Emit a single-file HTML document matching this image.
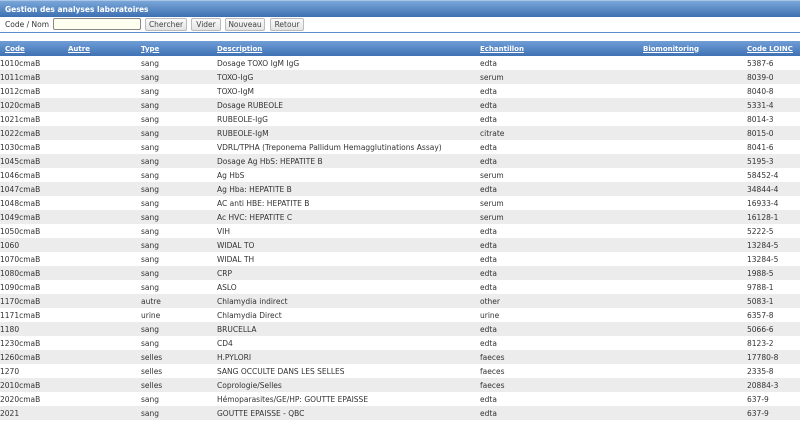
<!DOCTYPE html>
<html><head><meta charset="utf-8"><style>
body{margin:0;width:800px;height:423px;overflow:hidden;background:#fff;font-family:"DejaVu Sans","Liberation Sans",sans-serif;font-size:7.5px;color:#333}
.title{position:absolute;left:0;top:0;width:800px;height:17px;background:linear-gradient(#7aa6d8,#3d70b2);color:#fff;font-weight:bold;font-size:7.5px;line-height:17px;text-indent:5px;box-sizing:border-box;border-top:1px solid #a9c6e8}
.bar{position:absolute;left:0;top:17px;width:800px;height:15px;border-bottom:1px solid #5b8ccc}
.bar span{position:absolute;left:5px;top:3px}
.inp{position:absolute;left:53px;top:1px;width:88px;height:12px;background:#fffff0;border:1px solid #888;border-radius:2px;box-sizing:border-box}
.btn{position:absolute;top:1px;height:13px;border:1px solid #bbb;border-radius:2px;background:linear-gradient(#fafafa,#e4e4e4);box-sizing:border-box;line-height:11px;text-align:center;color:#444}
table{position:absolute;left:0;top:41px;width:800px;border-collapse:collapse}
th{height:15px;background:linear-gradient(#6f9dd6,#3f72b4);color:#fff;font-weight:bold;text-decoration:underline;text-align:left;padding:0;font-size:7px}
td{height:14px;padding:0;white-space:nowrap}
tbody tr:nth-child(even) td{background:#ececec}
</style></head><body>
<div class="title">Gestion des analyses laboratoires</div>
<div class="bar"><span>Code / Nom</span><div class="inp"></div>
<div class="btn" style="left:145px;width:42px">Chercher</div>
<div class="btn" style="left:191px;width:30px">Vider</div>
<div class="btn" style="left:225px;width:40px">Nouveau</div>
<div class="btn" style="left:270px;width:34px">Retour</div></div>
<table>
<colgroup><col style="width:68px"><col style="width:73px"><col style="width:76px"><col style="width:263px"><col style="width:163px"><col style="width:104px"><col></colgroup>
<thead><tr><th style="padding-left:5px">Code</th><th>Autre</th><th>Type</th><th>Description</th><th>Echantillon</th><th>Biomonitoring</th><th>Code LOINC</th></tr></thead>
<tbody>
<tr><td>1010cmaB</td><td></td><td>sang</td><td>Dosage TOXO IgM IgG</td><td>edta</td><td></td><td>5387-6</td></tr>
<tr><td>1011cmaB</td><td></td><td>sang</td><td>TOXO-IgG</td><td>serum</td><td></td><td>8039-0</td></tr>
<tr><td>1012cmaB</td><td></td><td>sang</td><td>TOXO-IgM</td><td>edta</td><td></td><td>8040-8</td></tr>
<tr><td>1020cmaB</td><td></td><td>sang</td><td>Dosage RUBEOLE</td><td>edta</td><td></td><td>5331-4</td></tr>
<tr><td>1021cmaB</td><td></td><td>sang</td><td>RUBEOLE-IgG</td><td>edta</td><td></td><td>8014-3</td></tr>
<tr><td>1022cmaB</td><td></td><td>sang</td><td>RUBEOLE-IgM</td><td>citrate</td><td></td><td>8015-0</td></tr>
<tr><td>1030cmaB</td><td></td><td>sang</td><td>VDRL/TPHA (Treponema Pallidum Hemagglutinations Assay)</td><td>edta</td><td></td><td>8041-6</td></tr>
<tr><td>1045cmaB</td><td></td><td>sang</td><td>Dosage Ag HbS: HEPATITE B</td><td>edta</td><td></td><td>5195-3</td></tr>
<tr><td>1046cmaB</td><td></td><td>sang</td><td>Ag HbS</td><td>serum</td><td></td><td>58452-4</td></tr>
<tr><td>1047cmaB</td><td></td><td>sang</td><td>Ag Hba: HEPATITE B</td><td>edta</td><td></td><td>34844-4</td></tr>
<tr><td>1048cmaB</td><td></td><td>sang</td><td>AC anti HBE: HEPATITE B</td><td>serum</td><td></td><td>16933-4</td></tr>
<tr><td>1049cmaB</td><td></td><td>sang</td><td>Ac HVC: HEPATITE C</td><td>serum</td><td></td><td>16128-1</td></tr>
<tr><td>1050cmaB</td><td></td><td>sang</td><td>VIH</td><td>edta</td><td></td><td>5222-5</td></tr>
<tr><td>1060</td><td></td><td>sang</td><td>WIDAL TO</td><td>edta</td><td></td><td>13284-5</td></tr>
<tr><td>1070cmaB</td><td></td><td>sang</td><td>WIDAL TH</td><td>edta</td><td></td><td>13284-5</td></tr>
<tr><td>1080cmaB</td><td></td><td>sang</td><td>CRP</td><td>edta</td><td></td><td>1988-5</td></tr>
<tr><td>1090cmaB</td><td></td><td>sang</td><td>ASLO</td><td>edta</td><td></td><td>9788-1</td></tr>
<tr><td>1170cmaB</td><td></td><td>autre</td><td>Chlamydia indirect</td><td>other</td><td></td><td>5083-1</td></tr>
<tr><td>1171cmaB</td><td></td><td>urine</td><td>Chlamydia Direct</td><td>urine</td><td></td><td>6357-8</td></tr>
<tr><td>1180</td><td></td><td>sang</td><td>BRUCELLA</td><td>edta</td><td></td><td>5066-6</td></tr>
<tr><td>1230cmaB</td><td></td><td>sang</td><td>CD4</td><td>edta</td><td></td><td>8123-2</td></tr>
<tr><td>1260cmaB</td><td></td><td>selles</td><td>H.PYLORI</td><td>faeces</td><td></td><td>17780-8</td></tr>
<tr><td>1270</td><td></td><td>selles</td><td>SANG OCCULTE DANS LES SELLES</td><td>faeces</td><td></td><td>2335-8</td></tr>
<tr><td>2010cmaB</td><td></td><td>selles</td><td>Coprologie/Selles</td><td>faeces</td><td></td><td>20884-3</td></tr>
<tr><td>2020cmaB</td><td></td><td>sang</td><td>Hémoparasites/GE/HP: GOUTTE EPAISSE</td><td>edta</td><td></td><td>637-9</td></tr>
<tr><td>2021</td><td></td><td>sang</td><td>GOUTTE EPAISSE - QBC</td><td>edta</td><td></td><td>637-9</td></tr>
</tbody></table>
</body></html>
